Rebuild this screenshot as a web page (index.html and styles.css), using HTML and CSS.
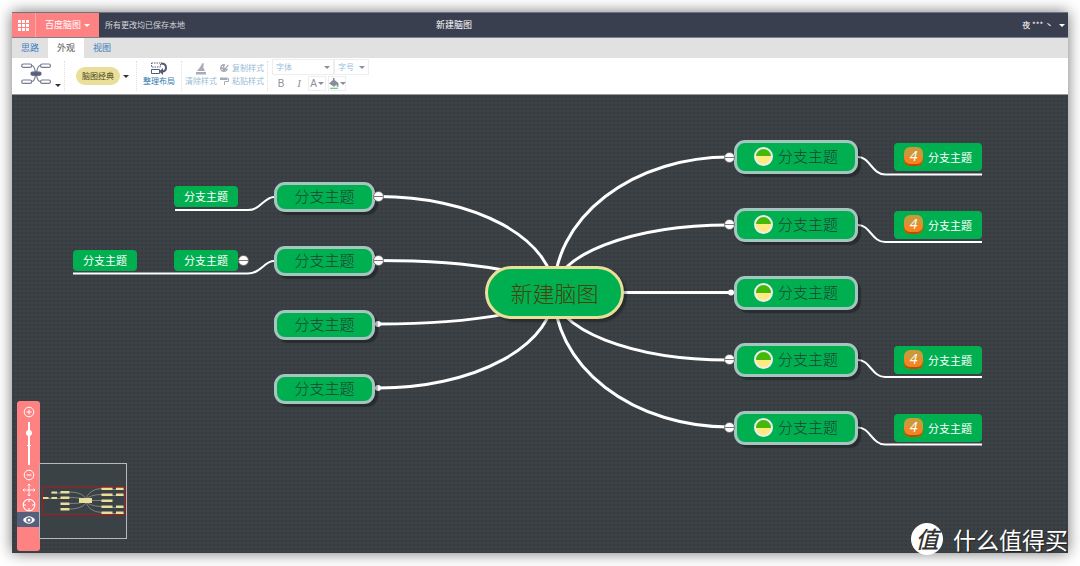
FILE: index.html
```html
<!DOCTYPE html>
<html lang="zh-CN">
<head>
<meta charset="utf-8">
<title>新建脑图</title>
<link rel="stylesheet" href="styles.css">
</head>
<body>
<div class="window">
  <header class="titlebar">
    <button class="apps" aria-label="应用">
      <svg width="11" height="11" viewBox="0 0 11 11"><path fill="#fff" d="M0 0h3v3H0zM4 0h3v3H4zM8 0h3v3H8zM0 4h3v3H0zM4 4h3v3H4zM8 4h3v3H8zM0 8h3v3H0zM4 8h3v3H4zM8 8h3v3H8z"/></svg>
    </button>
    <button class="brand">百度脑图<i class="caret"></i></button>
    <span class="saved">所有更改均已保存本地</span>
    <h1 class="doc-title">新建脑图</h1>
    <button class="user">夜 *** 丶<i class="caret"></i></button>
  </header>

  <nav class="tabs">
    <a href="#idea" class="tab">思路</a>
    <a href="#look" class="tab active">外观</a>
    <a href="#view" class="tab">视图</a>
  </nav>

  <div class="toolbar">
    <button class="group layout-picker" aria-label="布局">
      <svg width="31" height="22" viewBox="0 0 31 22" fill="none" stroke="#777c94" stroke-width="1.200"><rect x=".7" y="1" width="10" height="3.400" rx="1.700"/><rect x="19.500" y="1" width="10" height="3.400" rx="1.700"/><rect x=".7" y="17" width="10" height="3.400" rx="1.700"/><rect x="19.500" y="17" width="10" height="3.400" rx="1.700"/><path d="M10.500 2.500c4 0 3 6 4.500 8.500 1.500-2.500.5-8.500 4.500-8.500M10.500 18.500c4 0 3-5 4.500-7.500 1.500 2.500.5 7.500 4.500 7.500"/><rect x="10" y="9.200" width="10" height="3" rx="1.500" fill="#59607c" stroke="#59607c"/></svg>
      <i class="caret dark low"></i>
    </button>
    <button class="group theme"><span class="pill">脑图经典</span><i class="caret dark"></i></button>
    <button class="group stacked">
      <svg width="17" height="13" viewBox="0 0 17 13" fill="none" stroke="#555c78"><path stroke-dasharray="1.500 1" d="M.5 1h9v4h-9z"/><path d="M.5 7.500h8v4h-8z"/><path stroke-width="2" d="M10 1.500c3.500 0 5 1.800 5 4s-1.500 4-4 4"/><path fill="#555c78" stroke="none" d="M12 6v7L8 9.500z"/></svg>
      整理布局
    </button>
    <div class="group styles">
      <button class="stacked faded">
        <svg width="12" height="13" viewBox="0 0 12 13" fill="#555a70"><path d="M7.500 1l1.300.4L8.200 5.500 10 9H2L5 5.300zM1 10h10v2.500H1z"/></svg>
        清除样式
      </button>
      <div class="pair">
        <button class="inline faded"><svg width="9" height="8" viewBox="0 0 9 8" fill="#555a70"><path fill-rule="evenodd" d="M4 0l1.500.4L4 3l1 1 3-3.500.8.7L6 5l2-.4C7.500 7 6 8 4 8 1.500 8 0 6.200 0 4.200S1.600 0 4 0zM2 2v1.500h1V2zM1.500 5v1h1V5z"/></svg>复制样式</button>
        <button class="inline faded"><svg width="9" height="8" viewBox="0 0 9 8"><path fill="#555a70" d="M0 .5h7.500v2.500H0z"/><path fill="none" stroke="#555a70" d="M7.500 1.500h1v3h-4V8"/></svg>粘贴样式</button>
      </div>
    </div>
    <div class="fonts">
      <div class="row">
        <label class="pick family"><select aria-label="字体"><option>字体</option></select><i class="caret"></i></label>
        <label class="pick size"><select aria-label="字号"><option>字号</option></select><i class="caret"></i></label>
      </div>
      <div class="row">
        <button class="fmt bold">B</button>
        <button class="fmt italic">I</button>
        <button class="fmt boxed">A<i class="caret"></i></button>
        <button class="fmt boxed" aria-label="背景色"><svg width="10" height="11" viewBox="0 0 9 10"><path fill="#888c9b" d="M3.500 0H5v1.800L8.500 4.500V8H7V6L4.500 8 0 5l3.500-3.200z"/><path fill="#66cf92" d="M1 8.800h7V10H1z"/></svg><i class="caret"></i></button>
      </div>
    </div>
  </div>

  <main class="canvas">
    <svg class="edges" width="1056" height="458" viewBox="12 95 1056 458" fill="none" stroke="#fff">
      <g stroke-width="3">
        <path d="M554 292A175 135 0 0 1 729 157M554 292A175 67 0 0 1 729 225M554 292.500H731M554 292A175 68 0 0 0 729 360M554 292A175 135 0 0 0 729 427"/>
        <path d="M554 292A175 96 0 0 0 379 196.500M554 292A175 32 0 0 0 379 260.500M554 292A175 32 0 0 1 379 324M554 292A175 96 0 0 1 379 388"/>
      </g>
      <g stroke-width="2">
        <path d="M858 157c12 0 14 17.500 27 17.500h97M858 225c12 0 14 17 27 17h97M858 360c12 0 14 17 27 17h97M858 427.500c12 0 14 17 27 17h97"/>
        <path d="M274 197c-10 0-13 13-26 13h-73M274 261c-10 0-13 12.500-26 12.500H73"/>
      </g>
      <g fill="#fff" stroke="none"><circle cx="731" cy="292.500" r="3"/><circle cx="378" cy="324" r="3"/><circle cx="378" cy="388" r="3"/></g>
    </svg>

    <div class="node root">新建脑图</div>

    <div class="node branch l1">分支主题</div>
    <div class="node branch l2">分支主题</div>
    <div class="node branch l3">分支主题</div>
    <div class="node branch l4">分支主题</div>
    <div class="node leaf a1">分支主题</div>
    <div class="node leaf a2">分支主题</div>
    <div class="node leaf a3">分支主题</div>

    <div class="node branch right r1"><i class="progress"></i>分支主题</div>
    <div class="node branch right r2"><i class="progress"></i>分支主题</div>
    <div class="node branch right r3"><i class="progress"></i>分支主题</div>
    <div class="node branch right r4"><i class="progress"></i>分支主题</div>
    <div class="node branch right r5"><i class="progress"></i>分支主题</div>
    <div class="node leaf wide b1"><b class="priority">4</b>分支主题</div>
    <div class="node leaf wide b2"><b class="priority">4</b>分支主题</div>
    <div class="node leaf wide b4"><b class="priority">4</b>分支主题</div>
    <div class="node leaf wide b5"><b class="priority">4</b>分支主题</div>

    <button class="fold f1" aria-label="收起"></button>
    <button class="fold f2" aria-label="收起"></button>
    <button class="fold f3" aria-label="收起"></button>
    <button class="fold f4" aria-label="收起"></button>
    <button class="fold f5" aria-label="收起"></button>
    <button class="fold f6" aria-label="收起"></button>
    <button class="fold f7" aria-label="收起"></button>

    <div class="navigator">
      <button aria-label="放大"><svg width="12" height="12" viewBox="0 0 12 12" fill="none" stroke="#fff"><circle cx="6" cy="6" r="4.800"/><path d="M3.500 6h5M6 3.500v5"/></svg></button>
      <input class="zoom" type="range" min="0" max="100" value="79" aria-label="缩放">
      <button aria-label="缩小"><svg width="12" height="12" viewBox="0 0 12 12" fill="none" stroke="#fff"><circle cx="6" cy="6" r="4.800"/><path d="M3.500 6h5"/></svg></button>
      <button aria-label="移动"><svg width="14" height="14" viewBox="0 0 14 14" fill="none" stroke="#fff" stroke-width=".9"><path d="M7 1v12M1 7h12M5.500 2.500L7 1l1.500 1.500M5.500 11.500L7 13l1.500-1.500M2.500 5.500L1 7l1.500 1.500M11.500 5.500L13 7l-1.500 1.500"/></svg></button>
      <button aria-label="定位"><svg width="14" height="14" viewBox="0 0 14 14" fill="none" stroke="#fff" stroke-width="1.100"><circle cx="7" cy="7" r="5.800"/><path d="M7 1v3M7 10v3M1 7h3M10 7h3"/></svg></button>
      <button class="on" aria-label="导航器"><svg width="14" height="10" viewBox="0 0 14 10"><path fill="#fff" d="M1 5c3-5 9-5 12 0-3 5-9 5-12 0z"/><circle cx="7" cy="5" r="2.800" fill="#565f7b"/><circle cx="7" cy="5" r="1.500" fill="#fff"/></svg></button>
    </div>

    <div class="minimap">
      <svg width="86" height="74" viewBox="40 464 86 74">
        <path fill="none" stroke="#8d9294" stroke-width=".8" d="M86 500A16 12 0 0 1 102 488.500M86 500A16 6 0 0 1 102 494.500M86 500.500h16M86 500A16 6 0 0 0 102 506.500M86 500A16 12 0 0 0 102 512.500M86 500A16 8 0 0 0 70 492M86 500A16 3 0 0 0 70 497.500M86 500A16 3 0 0 1 70 503.500M86 500A16 8 0 0 1 70 509M51 493h10M43 498.500h18M112 489.500h12M112 495.500h12M112 507.500h12M112 513.500h12"/>
        <path fill="#e9df98" d="M79 498h13v5H79zM60.500 491h9v2.500h-9zM60.500 496.500h9v2.500h-9zM60.500 502.500h9v2.500h-9zM60.500 508h9v2.500h-9zM51.500 491.500h5.500v2h-5.500zM51.500 497h5.500v2h-5.500zM43 497h5.500v2H43zM101.500 487.500h11v2.500h-11zM101.500 493.500h11v2.500h-11zM101.500 499.500h11v2.500h-11zM101.500 505.500h11v2.500h-11zM101.500 511.500h11v2.500h-11zM116 487.500h7.500v2.500H116zM116 493.500h7.500v2.500H116zM116 505.500h7.500v2.500H116zM116 511.500h7.500v2.500H116z"/>
        <rect x="42.500" y="487" width="82" height="27.500" fill="none" stroke="#b01818"/>
      </svg>
    </div>

    <div class="watermark"><span class="seal">值</span>什么值得买</div>
  </main>
</div>
</body>
</html>
```
FILE: styles.css
```css
* { box-sizing: border-box; }

body {
  margin: 0;
  min-height: 100vh;
  padding: 12px 12px 13px;
  display: flex;
  background: #fff;
  font: 8px/12px "Noto Sans CJK SC", sans-serif;
  overflow-x: hidden;
}

button, select {
  margin: 0;
  padding: 0;
  border: 0;
  background: none;
  font: inherit;
  color: inherit;
}

svg { display: block; flex: none; }

.window {
  flex: 1;
  display: flex;
  flex-direction: column;
  box-shadow: 0 0 14px rgba(0, 0, 0, .55);
}

.caret {
  border: 3px solid transparent;
  border-top-color: currentColor;
  border-bottom: 0;
}

.caret.dark { color: #333; }

/* Title bar */
.titlebar {
  position: relative;
  display: flex;
  height: 26px;
  background: #3a3f50;
  border-top: 1px solid #6f7382;
  border-bottom: 1px solid #7f828e;
  color: #fff;
}

.apps, .brand, .user {
  display: flex;
  align-items: center;
  justify-content: center;
}

.apps { width: 24px; background: #fe8282; border-right: 1px solid #fea9a9; }
.brand { width: 63px; gap: 3px; background: #fe8282; font-size: 9px; }
.brand .caret { border-width: 3px 3px 0; }
.saved { margin-left: 6px; line-height: 24px; color: #d3d5dc; }

.doc-title {
  margin: 0;
  position: absolute;
  left: 50%;
  transform: translateX(-50%);
  margin-left: -86px;
  font: 9px/24px "Noto Sans CJK SC", sans-serif;
}

.user { margin-left: auto; gap: 6px; padding-right: 3px; }

/* Tabs */
.tabs { display: flex; height: 20px; background: #e1e1e1; }

.tab {
  width: 36px;
  font-size: 9px;
  line-height: 19px;
  text-align: center;
  color: #3a80bd;
  text-decoration: none;
}

.tab.active { background: #fff; color: #555; }

/* Toolbar */
.toolbar {
  display: flex;
  height: 37px;
  background: #fff;
  border-bottom: 1px solid #999;
  color: #2f78ad;
}

.group {
  display: flex;
  align-items: center;
  margin: 3px 0;
  border-right: 1px dotted #e0e0e0;
}

.layout-picker { width: 53px; padding-left: 9px; gap: 3px; }
.layout-picker svg { align-self: flex-start; margin-top: 2px; }
.low { align-self: flex-end; margin-bottom: 4px; }
.theme { width: 72px; padding-left: 11px; gap: 3px; }

.pill {
  width: 44px;
  border-radius: 10px;
  background: #e9df98;
  color: #4d4522;
  line-height: 18px;
  text-align: center;
}

.stacked {
  width: 45px;
  display: flex;
  flex-direction: column;
  justify-content: center;
  align-items: center;
}

button.stacked { padding-bottom: 3px; }

.styles { width: 86px; }
.styles .stacked { width: 38px; }
.faded { opacity: .5; }
.pair { display: flex; flex-direction: column; gap: 1px; margin-bottom: 4px; }
.inline { display: flex; align-items: center; gap: 3px; }

.fonts { padding: 1px 0 0 4px; display: flex; flex-direction: column; gap: 1px; }
.row { display: flex; color: #8e9099; }

.pick {
  display: flex;
  align-items: center;
  height: 16px;
  padding: 0 3px;
  border: 1px solid #eee;
}

.pick select { flex: 1; appearance: none; color: #97bfdf; outline: 0; line-height: 12px; }
.family { width: 62px; }
.size { width: 35px; }

.fmt { width: 18px; height: 15px; font: 10px/15px "Liberation Sans", sans-serif; }
.italic { font-family: "Liberation Serif", serif; font-style: italic; font-size: 11px; }

.boxed {
  display: flex;
  align-items: center;
  justify-content: center;
  gap: 1px;
  margin-right: 2px;
  border: 1px solid #eee;
}

.boxed .caret { border-width: 3px 3px 0; }

/* Canvas */
.canvas {
  flex: 1;
  min-height: 458px;
  position: relative;
  background: #3b4145 radial-gradient(circle at 2px 2px, #353b3f 1px, transparent 1px) 0 0 / 4px 4px;
}

.edges { position: absolute; left: 0; top: 0; }

.node {
  position: absolute;
  display: flex;
  align-items: center;
  justify-content: center;
  background: #00b050;
  white-space: nowrap;
}

.root {
  left: 473px;
  top: 171px;
  width: 139px;
  height: 53px;
  padding-bottom: 2px;
  border: 3px solid #e9df98;
  border-radius: 27px;
  box-shadow: 3px 3px 2px rgba(0, 0, 0, .3);
  color: #49400a;
  font-size: 22px;
  font-weight: 300;
}

.branch {
  left: 262px;
  width: 101px;
  height: 30px;
  padding-bottom: 2px;
  border: 3px solid #a4c5c0;
  border-radius: 11px;
  box-shadow: 3px 3px 1px rgba(0, 0, 0, .3);
  color: #1f4034;
  font-size: 15px;
  font-weight: 300;
}

.right { left: 722px; width: 124px; height: 34px; gap: 5px; }

.leaf {
  width: 64px;
  height: 21px;
  padding-bottom: 1px;
  border-radius: 4px;
  color: #fff;
  font-size: 11px;
}

.wide { left: 882px; width: 88px; height: 28px; gap: 5px; }

.l1 { top: 87px; }
.l2 { top: 151px; }
.l3 { top: 215px; }
.l4 { top: 279px; }
.a1 { left: 162px; top: 91px; }
.a2 { left: 162px; top: 155px; }
.a3 { left: 61px; top: 155px; }
.r1 { top: 45px; }
.r2 { top: 113px; }
.r3 { top: 181px; }
.r4 { top: 248px; }
.r5 { top: 316px; }
.b1 { top: 48px; }
.b2 { top: 116px; }
.b4 { top: 251px; }
.b5 { top: 319px; }

.progress {
  width: 19px;
  height: 19px;
  border: 2px solid #eee;
  border-radius: 50%;
  background: linear-gradient(#45b90a 50%, #ffea80 50%);
}

.priority {
  width: 19px;
  height: 19px;
  border-radius: 6px;
  background: linear-gradient(#cc9838 45%, #f28624 45%);
  box-shadow: inset 0 -2px #b85000;
  font: italic 14px/18px "Open Sans", sans-serif;
  text-align: center;
}

.fold {
  position: absolute;
  width: 11px;
  height: 11px;
  border: 1px solid #777;
  border-radius: 50%;
  background: linear-gradient(#fff 4px, #777 4px, #777 5px, #fff 5px);
}

.f1 { left: 361px; top: 96px; }
.f2 { left: 361px; top: 160px; }
.f3 { left: 226px; top: 160px; }
.f4 { left: 712px; top: 57px; }
.f5 { left: 712px; top: 124px; }
.f6 { left: 712px; top: 259px; }
.f7 { left: 712px; top: 327px; }

/* Navigator */
.navigator {
  position: absolute;
  left: 5px;
  bottom: 2px;
  width: 23px;
  height: 150px;
  padding-top: 3px;
  display: flex;
  flex-direction: column;
  border-radius: 3px;
  background: #fe8282;
}

.navigator button {
  height: 15px;
  display: flex;
  align-items: center;
  justify-content: center;
}

.navigator .on { background: #565f7b; }

.zoom {
  writing-mode: vertical-lr;
  direction: rtl;
  appearance: none;
  width: 6px;
  height: 43px;
  margin: 3px auto 2px;
  background:
    linear-gradient(#fff, #fff) center 23px / 4px 1px no-repeat,
    linear-gradient(#fff, #fff) center / 2px 100% no-repeat;
}

.zoom::-webkit-slider-thumb {
  appearance: none;
  width: 6px;
  height: 6px;
  border-radius: 50%;
  background: #fff;
}

.minimap {
  position: absolute;
  left: 27px;
  bottom: 14px;
  border: 1px solid #b5b8ba;
  background: #3b4246;
}

.watermark {
  position: absolute;
  right: 0;
  bottom: -2px;
  display: flex;
  align-items: center;
  gap: 10px;
  color: #fff;
  font-size: 23px;
  line-height: 30px;
  white-space: nowrap;
  text-shadow: 1px 1px 1px #222;
}

.seal {
  width: 32px;
  height: 32px;
  border-radius: 50%;
  background: #fff;
  color: #333;
  font-style: italic;
  font-weight: 500;
  text-align: center;
  text-shadow: none;
}
```
